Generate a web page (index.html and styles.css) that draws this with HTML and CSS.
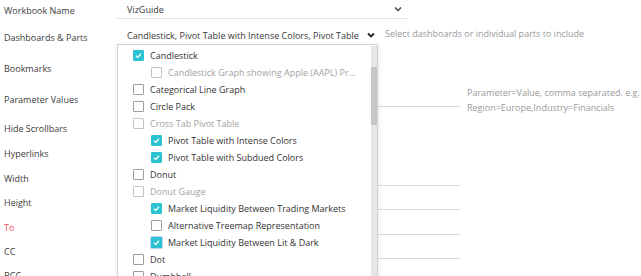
FILE: index.html
```html
<!DOCTYPE html>
<html>
<head>
<meta charset="utf-8">
<link rel="stylesheet" href="styles.css">
</head>
<body>
<div class="form">
  <div class="row r1">
    <div class="label">Workbook Name</div>
    <div class="field wb">
      <span class="val">VizGuide</span>
      <svg class="chev light" width="8" height="6" viewBox="0 0 8 6"><polyline points="1,1.5 4,4.5 7,1.5" fill="none" stroke="#444" stroke-width="1.4"/></svg>
    </div>
  </div>
  <div class="row r2">
    <div class="label">Dashboards &amp; Parts</div>
    <div class="field dash">
      <span class="val">Candlestick, Pivot Table with Intense Colors, Pivot Table</span>
      <svg class="chev" width="8" height="6" viewBox="0 0 8 6"><polyline points="1,1.5 4,4.5 7,1.5" fill="none" stroke="#222" stroke-width="1.8"/></svg>
      <div class="panel">
        <ul class="list">
          <li class="item"><span class="cb on"><svg width="9" height="9" viewBox="0 0 9 9"><polyline points="2,4.8 3.8,6.4 7,2.8" fill="none" stroke="#fff" stroke-width="1.3"/></svg></span>Candlestick</li>
          <li class="item sub dis"><span class="cb"></span>Candlestick Graph showing Apple (AAPL) Pr...</li>
          <li class="item"><span class="cb"></span>Categorical Line Graph</li>
          <li class="item"><span class="cb"></span>Circle Pack</li>
          <li class="item dis"><span class="cb"></span>Cross Tab Pivot Table</li>
          <li class="item sub"><span class="cb on"><svg width="9" height="9" viewBox="0 0 9 9"><polyline points="2,4.8 3.8,6.4 7,2.8" fill="none" stroke="#fff" stroke-width="1.3"/></svg></span>Pivot Table with Intense Colors</li>
          <li class="item sub"><span class="cb on"><svg width="9" height="9" viewBox="0 0 9 9"><polyline points="2,4.8 3.8,6.4 7,2.8" fill="none" stroke="#fff" stroke-width="1.3"/></svg></span>Pivot Table with Subdued Colors</li>
          <li class="item"><span class="cb"></span>Donut</li>
          <li class="item dis"><span class="cb"></span>Donut Gauge</li>
          <li class="item sub"><span class="cb on"><svg width="9" height="9" viewBox="0 0 9 9"><polyline points="2,4.8 3.8,6.4 7,2.8" fill="none" stroke="#fff" stroke-width="1.3"/></svg></span>Market Liquidity Between Trading Markets</li>
          <li class="item sub"><span class="cb"></span>Alternative Treemap Representation</li>
          <li class="item sub"><span class="cb on focus"><svg width="9" height="9" viewBox="0 0 9 9"><polyline points="2,4.8 3.8,6.4 7,2.8" fill="none" stroke="#fff" stroke-width="1.3"/></svg></span>Market Liquidity Between Lit &amp; Dark</li>
          <li class="item"><span class="cb"></span>Dot</li>
          <li class="item"><span class="cb"></span>Dumbbell</li>
        </ul>
        <div class="track"><div class="thumb"></div></div>
      </div>
    </div>
    <div class="help">Select dashboards or individual parts to include</div>
  </div>
  <div class="row r3">
    <div class="label">Bookmarks</div>
    <div class="field short"></div>
  </div>
  <div class="row r4">
    <div class="label">Parameter Values</div>
    <div class="field line"></div>
    <div class="help two">Parameter=Value, comma separated. e.g.<br>Region=Europe,Industry=Financials</div>
  </div>
  <div class="row r5">
    <div class="label">Hide Scrollbars</div>
    <div class="field short"></div>
  </div>
  <div class="row r6">
    <div class="label">Hyperlinks</div>
    <div class="field short"></div>
  </div>
  <div class="row r7">
    <div class="label">Width</div>
    <div class="field line"></div>
  </div>
  <div class="row r8">
    <div class="label">Height</div>
    <div class="field line"></div>
  </div>
  <div class="row r9">
    <div class="label req">To</div>
    <div class="field line"></div>
  </div>
  <div class="row r10">
    <div class="label">CC</div>
    <div class="field line"></div>
  </div>
  <div class="row r11">
    <div class="label">BCC</div>
    <div class="field line"></div>
  </div>
</div>
</body>
</html>
```
FILE: styles.css
```css
html, body {
  margin: 0;
  padding: 0;
  background: #fff;
  overflow: hidden;
}
body {
  font-family: "Open Sans", "Noto Sans", sans-serif;
  font-size: 9px;
  color: #3a3a3a;
}
.form {
  display: flex;
  flex-direction: column;
}
.row {
  display: flex;
  align-items: center;
}
.r1 { height: 20px; }
.r2 { height: 34px; position: relative; z-index: 2; }
.r3 { height: 28px; }
.r4 { height: 34px; }
.r5 { height: 24px; }
.r6 { height: 26px; }
.r7 { height: 24px; }
.r8 { height: 24px; }
.r9 { height: 26px; }
.r10 { height: 22px; }
.r11 { height: 26px; }

.label {
  width: 113px;
  padding-left: 4px;
  color: #3d3d3d;
  white-space: nowrap;
}
.label.req { color: #ef5366; }

.field {
  box-sizing: border-box;
  height: 16px;
  display: flex;
  align-items: center;
}
.field.wb {
  width: 290px;
  height: 18px;
  padding: 0 5px 0 10px;
  border-bottom: 1px solid #dfe4ea;
  justify-content: space-between;
  margin-top: -1px;
}
.field.dash {
  width: 261px;
  padding: 0 3px 0 10px;
  position: relative;
  justify-content: space-between;
  margin-top: -4px;
}
.field.dash .val {
  white-space: nowrap;
  overflow: hidden;
}
.field.short { width: 261px; }
.field.line {
  width: 343px;
  border-bottom: 1px solid #d9d9d9;
}
.val { color: #3a3a3a; }
.chev { flex: none; margin-left: 6px; }
.chev.light { margin-right: 0; }

.help {
  color: #9a9a9a;
  margin-left: 7px;
  white-space: nowrap;
}
.r2 .help { margin-top: -8px; }
.help.two { line-height: 15px; margin-top: 2px; }

.panel {
  position: absolute;
  left: 0;
  top: 17px;
  width: 261px;
  height: 240px;
  box-sizing: border-box;
  background: #fff;
  border: 1px solid #d3d3d3;
  box-shadow: 0 2px 5px rgba(0, 0, 0, 0.12);
  display: flex;
}
.list {
  list-style: none;
  margin: 0;
  padding: 2px 0 0 15px;
  flex: 1;
  overflow: hidden;
}
.item {
  height: 17px;
  display: flex;
  align-items: center;
  white-space: nowrap;
  color: #333;
}
.item.sub { padding-left: 18px; }
.item.dis { color: #a3a3a3; }
.cb {
  box-sizing: border-box;
  width: 11px;
  height: 11px;
  border: 1px solid #9e9e9e;
  border-radius: 1px;
  margin-right: 6px;
  flex: none;
  display: flex;
  align-items: center;
  justify-content: center;
  background: #fff;
}
.item.dis .cb { border-color: #c4c4c4; }
.cb.on {
  background: #2bc3d2;
  border-color: #2bc3d2;
}
.cb.focus { box-shadow: 0 0 0 1px #bcd6f2; }
.track {
  width: 6px;
  margin: 1px 0 0 0;
  background: #e6e6e6;
  flex: none;
}
.thumb {
  margin-top: 21px;
  height: 58px;
  background: #c6c6c6;
}
```
